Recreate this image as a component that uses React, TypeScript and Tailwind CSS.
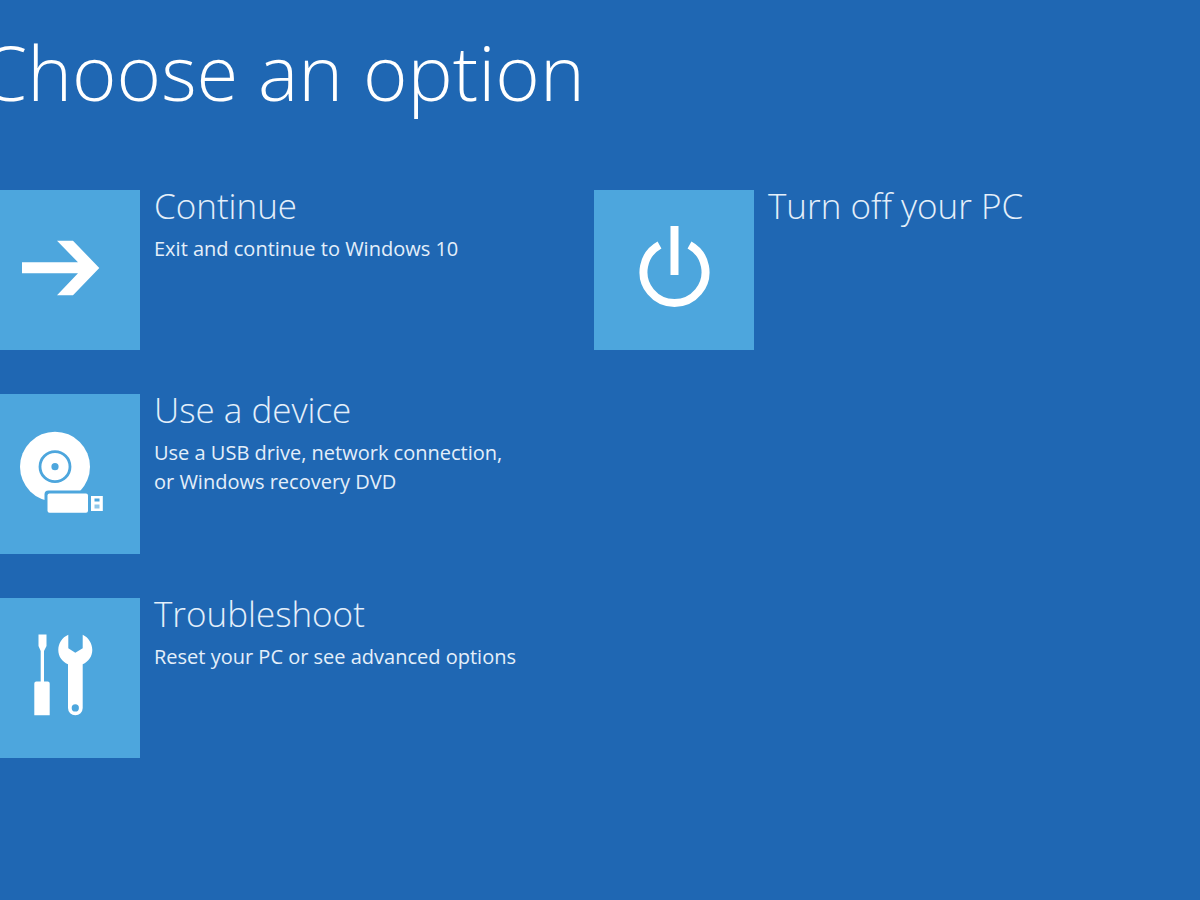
import React from "react";

const ArrowIcon: React.FC = () => (
  <svg viewBox="0 0 160 160" className="size-40" fill="white" aria-hidden="true">
    <path d="M42 72.3H98L77 50.7H93L119.3 78L93 105.3H77L98 83.3H42Z" />
  </svg>
);

const DeviceIcon: React.FC = () => (
  <svg viewBox="0 0 160 160" className="size-40" aria-hidden="true">
    <circle cx="75" cy="72.7" r="35" fill="white" />
    <circle cx="75" cy="72.7" r="15" fill="none" stroke="#4da6dd" strokeWidth="2.8" />
    <circle cx="75" cy="72.7" r="3.6" fill="#4da6dd" />
    <rect x="64.5" y="96.5" width="46" height="26" rx="4" fill="#4da6dd" />
    <rect x="67.5" y="99.5" width="40.5" height="19.3" rx="2" fill="white" />
    <rect x="111" y="102" width="11.8" height="15" fill="white" />
    <rect x="114.5" y="104.5" width="5" height="3" fill="#4da6dd" />
    <rect x="114.5" y="110.5" width="5" height="4" fill="#8fc7ea" />
  </svg>
);

const ToolsIcon: React.FC = () => (
  <svg viewBox="0 0 160 160" className="size-40" aria-hidden="true">
    <path
      fill="white"
      d="M58.5 36.5H66.5V48L64 53V83.5H67.7Q69.7 83.5 69.7 85.5V117.3H54.3V85.5Q54.3 83.5 56.3 83.5H60.7V53L58.5 48Z"
    />
    <path
      fill="white"
      fillRule="evenodd"
      d="M88.3 36.8V50.3L95.3 54.7L102.7 50.3V36.8C108.5 39.5 112.3 45.5 112.3 52C112.3 58.5 108.5 63.5 102.7 66.3V110A7.3 7.3 0 0 1 88 110V66.3C82 63.5 78.3 58.5 78.3 52C78.3 45.5 82 39.5 88.3 36.8ZM95.3 106.3A3.6 3.6 0 1 0 95.3 113.5A3.6 3.6 0 1 0 95.3 106.3Z"
    />
  </svg>
);

const PowerIcon: React.FC = () => (
  <svg viewBox="0 0 160 160" className="size-40" fill="none" stroke="white" strokeWidth="8" aria-hidden="true">
    <path d="M65.5 54.9A31 31 0 1 0 95.5 54.9" />
    <path d="M80.5 36V85" />
  </svg>
);

interface OptionProps {
  title: string;
  lines?: string[];
  icon: React.ReactNode;
}

const Option: React.FC<OptionProps> = ({ title, lines = [], icon }) => (
  <button type="button" className="flex w-full cursor-pointer items-start gap-3.5 text-left">
    <span className="size-40 shrink-0 bg-[#4da6dd]">{icon}</span>
    <span className="flex flex-col whitespace-nowrap">
      <span className="text-[35px] leading-8 font-light text-[#e4effa]">{title}</span>
      {lines.length > 0 && (
        <span className="mt-3 flex flex-col text-[20px] leading-[29px] text-[#e4effa]">
          {lines.map((line) => (
            <span key={line}>{line}</span>
          ))}
        </span>
      )}
    </span>
  </button>
);

export default function App() {
  return (
    <div className="min-h-screen overflow-hidden bg-[#1f67b3] font-['Open_Sans',sans-serif]">
      <main className="-ml-5 pt-7">
        <h1 className="text-[76px] leading-[88px] font-light whitespace-nowrap text-white">Choose an option</h1>
        <div className="mt-[74px] grid grid-cols-2 gap-x-2">
          <div className="flex flex-col gap-11">
            <Option title="Continue" lines={["Exit and continue to Windows 10"]} icon={<ArrowIcon />} />
            <Option
              title="Use a device"
              lines={["Use a USB drive, network connection,", "or Windows recovery DVD"]}
              icon={<DeviceIcon />}
            />
            <Option title="Troubleshoot" lines={["Reset your PC or see advanced options"]} icon={<ToolsIcon />} />
          </div>
          <div>
            <Option title="Turn off your PC" icon={<PowerIcon />} />
          </div>
        </div>
      </main>
    </div>
  );
}
